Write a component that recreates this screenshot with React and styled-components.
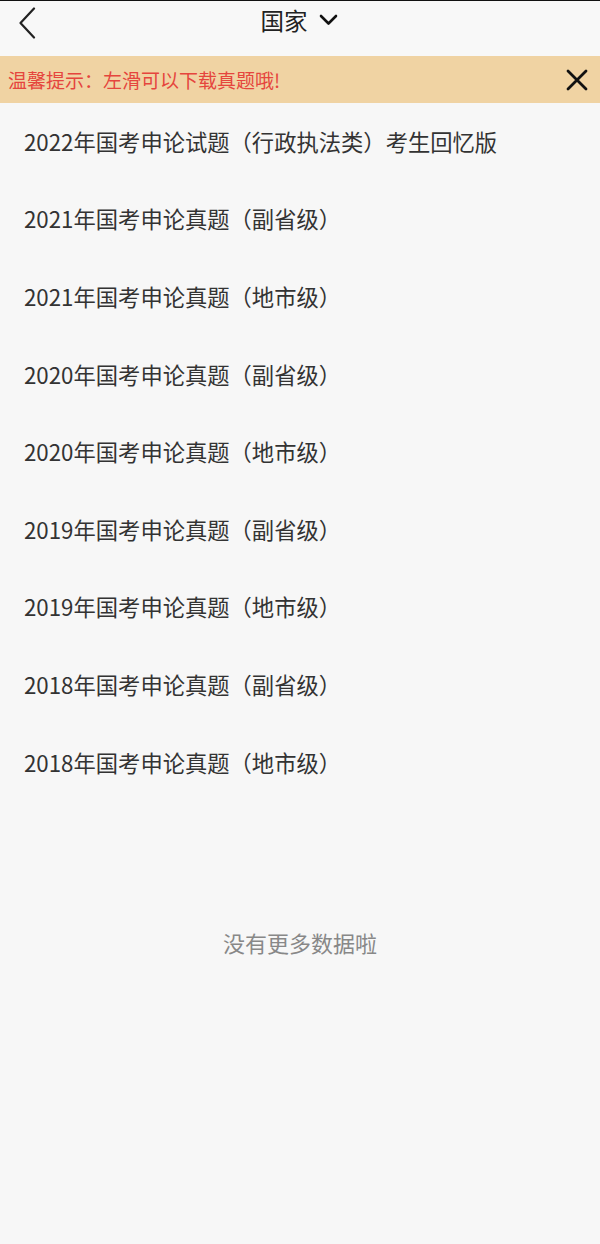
import React from "react";
import styled, { createGlobalStyle } from "styled-components";

const Global = createGlobalStyle`
  html, body { margin: 0; padding: 0; background: #f7f7f7; }
  body { font-family: "Noto Sans CJK SC", "Noto Sans", sans-serif; }
`;

const Page = styled.div`
  width: 600px;
  min-height: 1244px;
  background: #f7f7f7;
  border-top: 1px solid #111;
  box-sizing: border-box;
  display: flex;
  flex-direction: column;
`;

const NavBar = styled.div`
  height: 55px;
  display: flex;
  align-items: center;
  justify-content: center;
  position: relative;
  background: #f8f8f8;
`;

const Back = styled.div`
  position: absolute;
  left: 18px;
  top: 4px;
  width: 22px;
  height: 36px;
  display: flex;
  align-items: center;
`;

const Title = styled.div`
  display: flex;
  align-items: center;
  gap: 11px;
  font-size: 23.5px;
  color: #222;
  margin-top: -17px;
  margin-left: -2px;
`;

const Banner = styled.div`
  height: 47px;
  background: #f0d3a3;
  display: flex;
  align-items: center;
  justify-content: space-between;
  padding: 0 12px 0 8px;
`;

const BannerText = styled.span`
  color: #e5453d;
  font-size: 19px;
`;

const List = styled.div`
  display: flex;
  flex-direction: column;
  margin-top: -1px;
`;

const Item = styled.div`
  height: 77.6px;
  display: flex;
  align-items: center;
  padding-left: 24px;
  font-size: 22.3px;
  color: #333;
`;

const Footer = styled.div`
  margin-top: 126px;
  text-align: center;
  font-size: 22px;
  color: #888;
`;

const items = [
  "2022年国考申论试题（行政执法类）考生回忆版",
  "2021年国考申论真题（副省级）",
  "2021年国考申论真题（地市级）",
  "2020年国考申论真题（副省级）",
  "2020年国考申论真题（地市级）",
  "2019年国考申论真题（副省级）",
  "2019年国考申论真题（地市级）",
  "2018年国考申论真题（副省级）",
  "2018年国考申论真题（地市级）",
];

export default function App() {
  return (
    <>
      <Global />
      <Page>
        <NavBar>
          <Back>
            <svg width="18" height="32" viewBox="0 0 18 32" fill="none">
              <path d="M16 1.5 L2.5 16 L16 30.5" stroke="#222" strokeWidth="2.2" strokeLinecap="round" strokeLinejoin="round" />
            </svg>
          </Back>
          <Title>
            <span>国家</span>
            <svg width="19" height="12" viewBox="0 0 19 12" fill="none">
              <path d="M2 2 L9.5 9.5 L17 2" stroke="#111" strokeWidth="2.6" strokeLinecap="round" strokeLinejoin="round" />
            </svg>
          </Title>
        </NavBar>
        <Banner>
          <BannerText>温馨提示：左滑可以下载真题哦!</BannerText>
          <svg width="22" height="22" viewBox="0 0 22 22" fill="none">
            <path d="M2 2 L20 20 M20 2 L2 20" stroke="#111" strokeWidth="2.8" strokeLinecap="round" />
          </svg>
        </Banner>
        <List>
          {items.map((t) => (
            <Item key={t}>{t}</Item>
          ))}
        </List>
        <Footer>没有更多数据啦</Footer>
      </Page>
    </>
  );
}
